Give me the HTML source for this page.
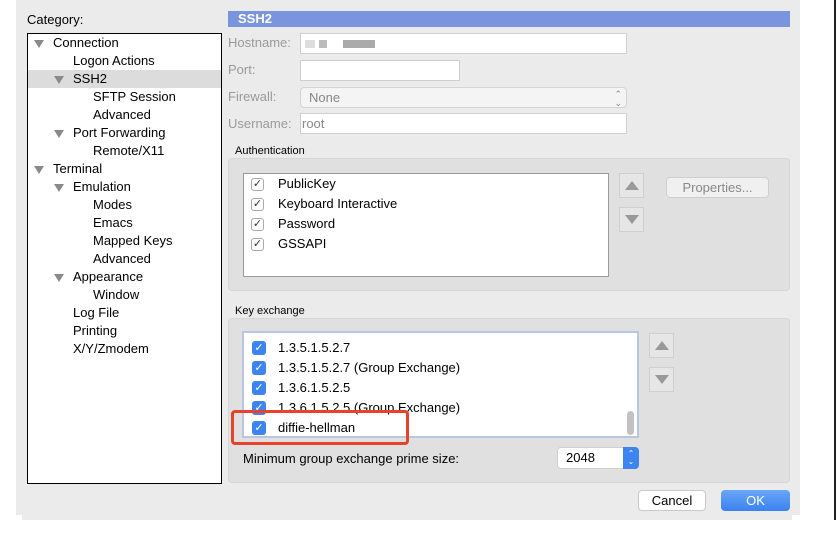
<!DOCTYPE html>
<html><head><meta charset="utf-8"><style>
*{margin:0;padding:0;box-sizing:border-box}
body{width:837px;height:547px;background:#fff;position:relative;overflow:hidden;font-family:"Liberation Sans",Arial,sans-serif;font-size:13px;color:#000}
.a{position:absolute}
.t{position:absolute;white-space:nowrap;line-height:18px}
.tri{position:absolute;width:0;height:0;border-left:5px solid transparent;border-right:5px solid transparent;border-top:8px solid #8a8a8a}
.lbl{color:#9a9a9a}
.inp{position:absolute;background:#fff;border:1px solid #cfcfcf}
.cb{position:absolute;width:13px;height:13px;border:1px solid #a8a8a8;border-radius:3px;background:#fff;font-size:11px;line-height:11px;text-align:center;color:#333}
.cbb{position:absolute;width:14px;height:14px;border-radius:3px;background:#3d84f0;color:#fff;font-size:11px;line-height:14px;text-align:center}
.sb{position:absolute;width:25px;height:25px;border:1px solid #cfcfcf;background:#e6e6e6}
</style></head><body>
<div class="a" style="left:16px;top:0;width:784px;height:515px;background:#ebebeb"></div>
<div class="a" style="left:22px;top:515px;width:770px;height:5px;background:#ebebeb"></div>
<div class="a" style="left:834px;top:0;width:2px;height:520px;background:#222"></div>

<div class="t" style="left:27px;top:11px">Category:</div>
<div class="a" style="left:27px;top:33px;width:195px;height:451px;background:#fff;border:1px solid #000"></div>
<div class="a" style="left:28px;top:70px;width:193px;height:18px;background:#dcdcdc"></div>
<div class="tri" style="left:34px;top:40px"></div><div class="t" style="left:53px;top:34px">Connection</div>
<div class="t" style="left:73px;top:52px">Logon Actions</div>
<div class="tri" style="left:54px;top:76px"></div><div class="t" style="left:73px;top:70px">SSH2</div>
<div class="t" style="left:93px;top:88px">SFTP Session</div>
<div class="t" style="left:93px;top:106px">Advanced</div>
<div class="tri" style="left:54px;top:130px"></div><div class="t" style="left:73px;top:124px">Port Forwarding</div>
<div class="t" style="left:93px;top:142px">Remote/X11</div>
<div class="tri" style="left:34px;top:166px"></div><div class="t" style="left:53px;top:160px">Terminal</div>
<div class="tri" style="left:54px;top:184px"></div><div class="t" style="left:73px;top:178px">Emulation</div>
<div class="t" style="left:93px;top:196px">Modes</div>
<div class="t" style="left:93px;top:214px">Emacs</div>
<div class="t" style="left:93px;top:232px">Mapped Keys</div>
<div class="t" style="left:93px;top:250px">Advanced</div>
<div class="tri" style="left:54px;top:274px"></div><div class="t" style="left:73px;top:268px">Appearance</div>
<div class="t" style="left:93px;top:286px">Window</div>
<div class="t" style="left:73px;top:304px">Log File</div>
<div class="t" style="left:73px;top:322px">Printing</div>
<div class="t" style="left:73px;top:340px">X/Y/Zmodem</div>

<div class="a" style="left:228px;top:11px;width:562px;height:16px;background:#7b94de;color:#fff;font-weight:bold;padding-left:10px;line-height:16px">SSH2</div>
<div class="t lbl" style="left:228px;top:34px">Hostname:</div>
<div class="inp" style="left:300px;top:33px;width:327px;height:21px"></div>
<div class="a" style="left:305px;top:40px;width:70px;height:8px;background:linear-gradient(90deg,#ddd 0 10px,#fff 10px 14px,#bbb 14px 22px,#fff 22px 38px,#aaa 38px)"></div>
<div class="t lbl" style="left:228px;top:61px">Port:</div>
<div class="inp" style="left:300px;top:60px;width:160px;height:21px"></div>
<div class="t lbl" style="left:228px;top:88px">Firewall:</div>
<div class="a" style="left:300px;top:87px;width:327px;height:21px;background:#f4f4f4;border:1px solid #d4d4d4;border-radius:4px;color:#888;padding-left:8px;line-height:19px">None<span style="position:absolute;right:4px;top:0;font-size:9px;line-height:9px;top:2px">⌃<br>⌄</span></div>
<div class="t lbl" style="left:228px;top:115px">Username:</div>
<div class="inp" style="left:300px;top:113px;width:327px;height:21px;color:#888;padding-left:1px;line-height:20px">root</div>

<div class="t" style="left:235px;top:142px;font-size:11px">Authentication</div>
<div class="a" style="left:228px;top:158px;width:562px;height:133px;background:#e0e0e0;border:1px solid #d6d6d6;border-radius:4px"></div>
<div class="a" style="left:243px;top:173px;width:366px;height:104px;background:#fff;border:1px solid #9a9a9a"></div>
<div class="cb" style="left:251px;top:178px">✓</div><div class="t" style="left:278px;top:175px">PublicKey</div>
<div class="cb" style="left:251px;top:198px">✓</div><div class="t" style="left:278px;top:195px">Keyboard Interactive</div>
<div class="cb" style="left:251px;top:218px">✓</div><div class="t" style="left:278px;top:215px">Password</div>
<div class="cb" style="left:251px;top:238px">✓</div><div class="t" style="left:278px;top:235px">GSSAPI</div>
<div class="sb" style="left:619px;top:173px"><div class="a" style="left:5px;top:7px;border-left:7px solid transparent;border-right:7px solid transparent;border-bottom:9px solid #999"></div></div>
<div class="sb" style="left:619px;top:207px"><div class="a" style="left:5px;top:7px;border-left:7px solid transparent;border-right:7px solid transparent;border-top:9px solid #999"></div></div>
<div class="a" style="left:666px;top:177px;width:103px;height:21px;background:#f0f0f0;border:1px solid #cfcfcf;border-radius:4px;color:#888;text-align:center;line-height:19px">Properties...</div>

<div class="t" style="left:235px;top:302px;font-size:11px">Key exchange</div>
<div class="a" style="left:228px;top:318px;width:562px;height:165px;background:#e0e0e0;border:1px solid #d6d6d6;border-radius:4px"></div>
<div class="a" style="left:242px;top:331px;width:397px;height:107px;background:#fff;border:2px solid #b9c6e0;overflow:hidden">
<div class="cbb" style="left:8px;top:8px">✓</div><div class="t" style="left:34px;top:6px">1.3.5.1.5.2.7</div>
<div class="cbb" style="left:8px;top:28px">✓</div><div class="t" style="left:34px;top:26px">1.3.5.1.5.2.7 (Group Exchange)</div>
<div class="cbb" style="left:8px;top:48px">✓</div><div class="t" style="left:34px;top:46px">1.3.6.1.5.2.5</div>
<div class="cbb" style="left:8px;top:68px">✓</div><div class="t" style="left:34px;top:66px">1.3.6.1.5.2.5 (Group Exchange)</div>
<div class="cbb" style="left:8px;top:88px">✓</div><div class="t" style="left:34px;top:86px">diffie-hellman</div>
<div class="a" style="left:383px;top:78px;width:7px;height:24px;background:#c2c2c2;border-radius:4px"></div>
</div>
<div class="a" style="left:231px;top:410px;width:178px;height:35px;border:3px solid #e8412c;border-radius:4px"></div>
<div class="sb" style="left:649px;top:333px"><div class="a" style="left:5px;top:7px;border-left:7px solid transparent;border-right:7px solid transparent;border-bottom:9px solid #999"></div></div>
<div class="sb" style="left:649px;top:367px"><div class="a" style="left:5px;top:7px;border-left:7px solid transparent;border-right:7px solid transparent;border-top:9px solid #999"></div></div>
<div class="t" style="left:243px;top:450px">Minimum group exchange prime size:</div>
<div class="a" style="left:557px;top:447px;width:82px;height:22px;background:#fff;border:1px solid #cfcfcf;border-radius:4px;padding-left:8px;line-height:20px">2048</div>
<div class="a" style="left:623px;top:447px;width:16px;height:22px;background:#3d84f0;border-radius:0 4px 4px 0;color:#fff;font-size:8px;line-height:8px;text-align:center;padding-top:3px">⌃<br>⌄</div>

<div class="a" style="left:638px;top:490px;width:68px;height:21px;background:#fff;border:1px solid #c8c8c8;border-radius:4px;text-align:center;line-height:19px">Cancel</div>
<div class="a" style="left:721px;top:490px;width:69px;height:21px;background:linear-gradient(#6aa6f8,#3b82f0);border-radius:4px;color:#fff;text-align:center;line-height:21px">OK</div>
</body></html>
